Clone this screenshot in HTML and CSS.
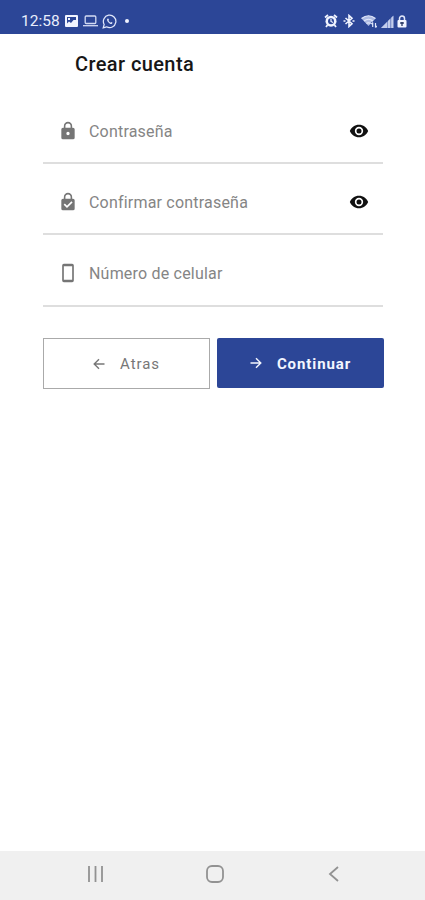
FILE: index.html
```html
<!DOCTYPE html>
<html lang="es">
<head>
<meta charset="utf-8">
<title>Crear cuenta</title>
<link rel="stylesheet" href="styles.css">
</head>
<body>
<header class="status">
  <span class="time">12:58</span>
  <svg class="s-img" width="13" height="12" viewBox="0 0 13 12"><rect width="13" height="12" rx="1" fill="#f1f4ff"/><path d="M2 2h9v3L8.500 5 6 8 4 6.500 2 8.500z" fill="#2c4697"/><path d="M3 3h2v2H3z" fill="#f1f4ff"/></svg>
  <svg class="s-laptop" width="15" height="12" viewBox="0 0 15 12" fill="none" stroke="#d3dbf3" stroke-width="1.300"><rect x="2.200" y="1" width="10.600" height="7.500" rx="1"/><path d="M0 10.700h15"/></svg>
  <svg class="s-chat" width="15" height="15" viewBox="0 0 24 24" fill="none" stroke="#e2e8fb" stroke-width="2"><path d="M2 22l1.500-5.300A10 10 0 1 1 7.300 20.500z"/><path d="M8.500 7.500c-2 3 3.500 9 7 8.500l1.500-2-2.500-1.300-1.200 1.200-3-3 1-1.200L10 7z" fill="#e2e8fb" stroke="none"/></svg>
  <span class="dot"></span>
  <span class="tray">
    <svg width="14" height="14" viewBox="0 0 14 14"><circle cx="7" cy="7.200" r="5.500" fill="#f1f4ff"/><path d="M1 3.500L4 1M13 3.500L10 1M3.500 11L2 13M10.500 11l1.500 2" stroke="#f1f4ff" stroke-width="1.800"/><circle cx="7" cy="7.200" r="3" fill="#2c4697"/><path d="M7 5v2.500l2 1" fill="none" stroke="#f1f4ff" stroke-width="1.200"/></svg>
    <svg width="12" height="14" viewBox="0 0 12 14" fill="none" stroke="#f1f4ff" stroke-width="1.600"><path d="M2.500 4L9 9.700 6 12.500v-11L9 4.300 2.500 10M.5 7h2M9.500 7h2"/></svg>
    <svg width="16" height="14" viewBox="0 0 16 14"><path d="M.5 4.500Q7.500-1 14.500 4.500L7.500 12z" fill="#aebbe3"/><path d="M.5 4.500Q7.500-1 14.500 4.500M3 7Q7.500 3.500 12 7M5.500 9.500q2-1.500 4 0" fill="none" stroke="#e2e8fb" stroke-width="1.200"/><path d="M10 8h6v6h-6z" fill="#2c4697"/><path d="M11.700 13V8.500M10.300 10l1.400-1.500M14.500 9v4.500M15.800 12l-1.300 1.500" stroke="#e2e8fb" stroke-width="1.200"/></svg>
    <svg width="13" height="13" viewBox="0 0 13 13"><path d="M0 13L12.500.5V13z" fill="#8193cd"/><path d="M0 13l6-6v6zM7 6l2-2v9H7zM10.300 2.700l2-2V13h-2z" fill="#c3cdec"/></svg>
    <svg width="10" height="13" viewBox="0 0 10 13"><path d="M2.500 6V3.500a2.500 2.500 0 0 1 5 0V6" fill="none" stroke="#e2e8fb" stroke-width="1.500"/><rect x=".5" y="5" width="9" height="7.500" rx="1" fill="#f1f4ff"/><path d="M3.300 7h3.400v2H5.700v2H4.300V9h-1z" fill="#35446f"/></svg>
  </span>
</header>
<main>
  <h1>Crear cuenta</h1>
  <form>
    <div class="field">
      <svg class="lead" viewBox="0 0 24 24"><path d="M18 8h-1V6A5 5 0 0 0 7 6v2H6a2 2 0 0 0-2 2v10a2 2 0 0 0 2 2h12a2 2 0 0 0 2-2V10a2 2 0 0 0-2-2zm-6 9a2 2 0 1 1 0-4 2 2 0 0 1 0 4zm3.100-9H8.900V6a3.100 3.100 0 0 1 6.200 0z"/></svg>
      <span class="label">Contraseña</span>
      <svg class="eye" viewBox="0 0 24 24"><path d="M12 4.500C7 4.500 2.730 7.610 1 12c1.730 4.390 6 7.500 11 7.500s9.270-3.110 11-7.500c-1.730-4.390-6-7.500-11-7.500zM12 17a5 5 0 1 1 0-10 5 5 0 0 1 0 10zm0-8a3 3 0 1 0 0 6 3 3 0 0 0 0-6z"/></svg>
    </div>
    <div class="field">
      <svg class="lead" viewBox="0 0 24 24"><path d="M18 8h-1V6A5 5 0 0 0 7 6v2H6a2 2 0 0 0-2 2v10a2 2 0 0 0 2 2h12a2 2 0 0 0 2-2V10a2 2 0 0 0-2-2zm-2.900 0H8.900V6a3.100 3.100 0 0 1 6.200 0z"/><path d="M7.500 14.500l3.300 3.300 6-6" fill="none" stroke="#fff" stroke-width="2"/></svg>
      <span class="label">Confirmar contraseña</span>
      <svg class="eye" viewBox="0 0 24 24"><path d="M12 4.500C7 4.500 2.730 7.610 1 12c1.730 4.390 6 7.500 11 7.500s9.270-3.110 11-7.500c-1.730-4.390-6-7.500-11-7.500zM12 17a5 5 0 1 1 0-10 5 5 0 0 1 0 10zm0-8a3 3 0 1 0 0 6 3 3 0 0 0 0-6z"/></svg>
    </div>
    <div class="field last">
      <svg class="lead" viewBox="0 0 24 24"><path d="M17 1H7a2 2 0 0 0-2 2v18a2 2 0 0 0 2 2h10a2 2 0 0 0 2-2V3a2 2 0 0 0-2-2zm0 19H7V4h10z"/></svg>
      <span class="label">Número de celular</span>
    </div>
    <div class="actions">
      <button type="button" class="btn back"><svg viewBox="0 0 12 12"><path d="M11.500 6H1.200M6 1.200L1.200 6 6 10.800"/></svg><span>Atras</span></button>
      <button type="button" class="btn next"><svg viewBox="0 0 12 12"><path d="M.5 6h10.300M6 1.200L10.800 6 6 10.800"/></svg><span>Continuar</span></button>
    </div>
  </form>
</main>
<nav>
  <svg width="18" height="18" viewBox="0 0 18 18"><path d="M2 1v16M8.500 1v16M15 1v16"/></svg>
  <svg width="18" height="18" viewBox="0 0 18 18"><rect x="1" y="1" width="16" height="16" rx="5"/></svg>
  <svg width="18" height="18" viewBox="0 0 18 18"><path d="M13 2L5 9l8 7"/></svg>
</nav>
</body>
</html>
```
FILE: styles.css
```css
* { box-sizing: border-box; }
body {
  margin: 0;
  height: 900px;
  display: flex;
  flex-direction: column;
  background: #fff;
  font-family: Roboto, sans-serif;
}
svg { flex: none; display: block; }
.status {
  height: 34px;
  padding: 8px 18px 0 21px;
  display: flex;
  align-items: center;
  background: #2c4697;
  color: #e9eefc;
}
.time { width: 44px; font-size: 15.500px; line-height: 20px; }
.s-laptop { margin-left: 5px; }
.s-chat { margin-left: 4px; }
.dot { width: 4px; height: 4px; margin-left: 8px; border-radius: 50%; background: #f1f4ff; }
.tray { margin-left: auto; display: flex; align-items: center; gap: 4px; }
.tray svg:nth-child(2) { margin: 0 2px 0 1px; }
.tray svg:nth-child(4) { margin-right: -1px; }

main { flex: 1; padding: 0 42px 0 43px; }
h1 {
  margin: 17px 0 0 32px;
  color: #171717;
  font-size: 20px;
  font-weight: 500;
  line-height: 26px;
  letter-spacing: .4px;
}
form { margin-top: 22px; }
.field {
  height: 71px;
  padding: 0 14px 0 15px;
  display: flex;
  align-items: center;
  border-bottom: 2px solid #dedede;
}
.field:first-child { height: 65px; }
.field.last { height: 72px; }
.field > * { position: relative; top: 3px; }
.field:first-child > * { top: 0; }
.field .label { top: 4px; }
.field:first-child .label { top: 1px; }
.lead { width: 20px; height: 20px; fill: #757575; }
.label { margin-left: 11px; color: #858585; font-size: 16px; line-height: 22px; letter-spacing: .2px; }
.eye { width: 20px; height: 20px; margin-left: auto; fill: #111; }

.actions { margin-top: 31px; display: grid; grid-template-columns: 167px 167px; gap: 7px; }
.btn {
  height: 50px;
  padding: 0;
  display: flex;
  align-items: center;
  justify-content: center;
  gap: 15px;
  border: 0;
  font-family: inherit;
  font-size: 15px;
  letter-spacing: .9px;
}
.btn svg { width: 12px; height: 12px; fill: none; stroke: currentColor; stroke-width: 1.400; }
.next span { position: relative; top: 1px; }
.back { height: 51px; border: 1px solid #aaa; background: #fff; color: #777; }
.next { border-radius: 2px; background: #2c4697; color: #f3f6ff; font-weight: 700; }

nav {
  height: 49px;
  display: flex;
  align-items: center;
  justify-content: space-between;
  padding: 0 82px 3px 87px;
  background: #f0f0f0;
}
nav svg { fill: none; stroke: #929292; stroke-width: 1.800; }
```
